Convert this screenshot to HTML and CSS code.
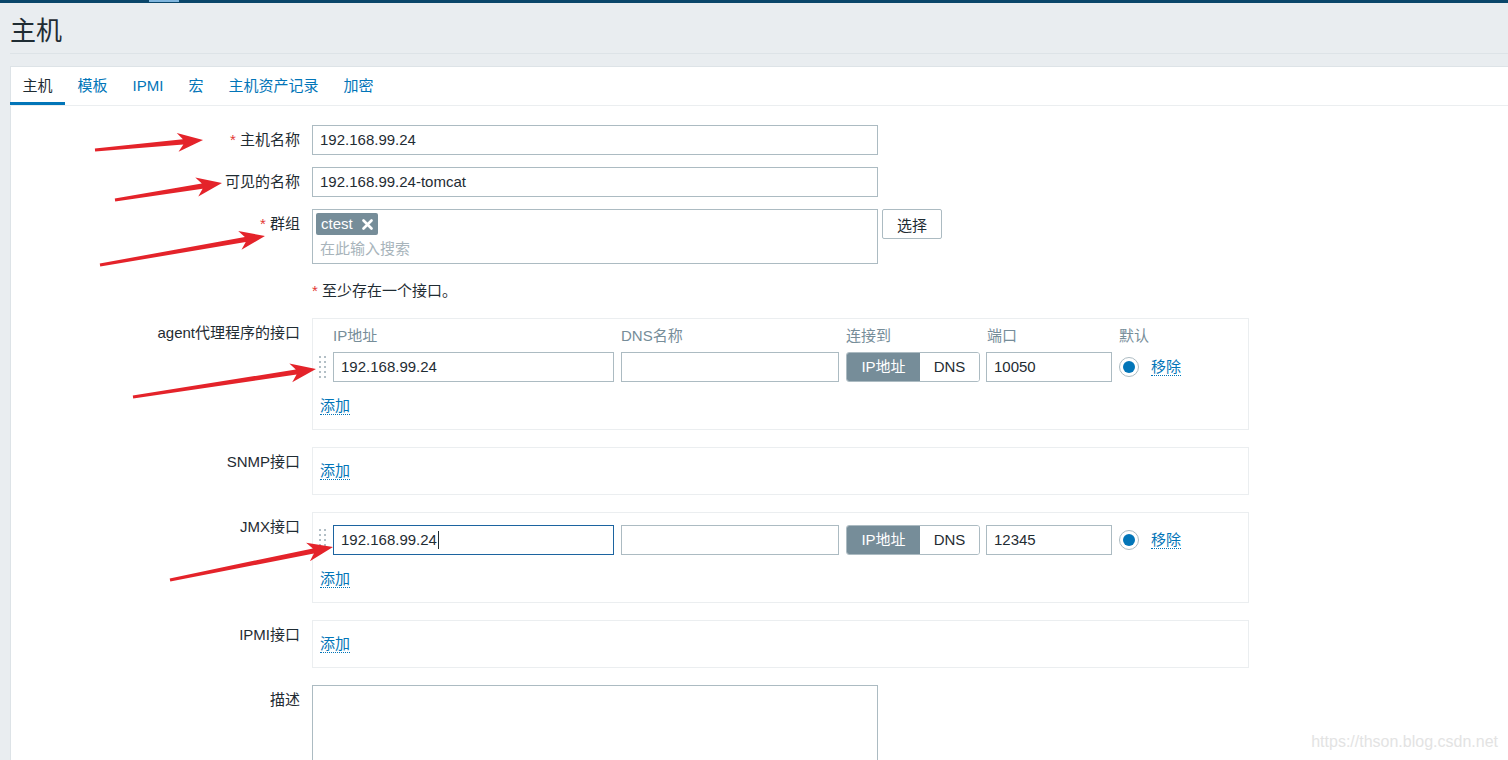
FILE: index.html
```html
<!DOCTYPE html>
<html lang="zh-CN">
<head>
<meta charset="utf-8">
<title>主机</title>
<link rel="stylesheet" href="styles.css">
</head>
<body>
<div class="topbar"><span class="topbar-mark"></span></div>
<div class="page">
  <header class="page-header"><h1 class="page-title">主机</h1></header>
  <div class="panel">
    <nav class="tabs">
      <a class="tab active">主机</a>
      <a class="tab">模板</a>
      <a class="tab">IPMI</a>
      <a class="tab">宏</a>
      <a class="tab">主机资产记录</a>
      <a class="tab">加密</a>
    </nav>
    <div class="form">
      <div class="row">
        <div class="lbl"><span class="req">*</span> 主机名称</div>
        <div class="field"><div class="input">192.168.99.24</div></div>
      </div>
      <div class="row">
        <div class="lbl">可见的名称</div>
        <div class="field"><div class="input">192.168.99.24-tomcat</div></div>
      </div>
      <div class="row row-lg">
        <div class="lbl"><span class="req">*</span> 群组</div>
        <div class="field ms-wrap">
          <div class="ms">
            <span class="tag">ctest<svg class="tag-x" width="11" height="11" viewBox="0 0 11 11"><path d="M1.5 1.5 L9.5 9.5 M9.5 1.5 L1.5 9.5" stroke="#fff" stroke-width="2.6" stroke-linecap="round"/></svg></span>
            <div class="ms-placeholder">在此输入搜索</div>
          </div>
          <button class="btn">选择</button>
        </div>
      </div>
      <div class="row row-lg">
        <div class="lbl-empty"></div>
        <div class="note"><span class="req">*</span> 至少存在一个接口。</div>
      </div>
      <div class="row row-box">
        <div class="lbl">agent代理程序的接口</div>
        <div class="ifbox has-head">
          <div class="if-grid if-head">
            <span></span><span>IP地址</span><span>DNS名称</span><span>连接到</span><span>端口</span><span class="nowrap">默认</span><span></span>
          </div>
          <div class="if-grid if-row">
            <svg class="handle" width="8" height="23" viewBox="0 0 8 23"><g fill="#b3bfc6"><rect x="1" y="0" width="2" height="2"/><rect x="6" y="0" width="2" height="2"/><rect x="1" y="5" width="2" height="2"/><rect x="6" y="5" width="2" height="2"/><rect x="1" y="10" width="2" height="2"/><rect x="6" y="10" width="2" height="2"/><rect x="1" y="15" width="2" height="2"/><rect x="6" y="15" width="2" height="2"/><rect x="1" y="20" width="2" height="2"/><rect x="6" y="20" width="2" height="2"/></g></svg>
            <div class="input fill">192.168.99.24</div>
            <div class="input fill"></div>
            <div class="toggle"><span class="seg on">IP地址</span><span class="seg">DNS</span></div>
            <div class="input fill">10050</div>
            <span class="radio"></span>
            <a class="link remove">移除</a>
          </div>
          <div class="if-add"><a class="link">添加</a></div>
        </div>
      </div>
      <div class="row row-box">
        <div class="lbl">SNMP接口</div>
        <div class="ifbox">
          <div class="if-add first"><a class="link">添加</a></div>
        </div>
      </div>
      <div class="row row-box">
        <div class="lbl">JMX接口</div>
        <div class="ifbox">
          <div class="if-grid if-row first">
            <svg class="handle" width="8" height="23" viewBox="0 0 8 23"><g fill="#b3bfc6"><rect x="1" y="0" width="2" height="2"/><rect x="6" y="0" width="2" height="2"/><rect x="1" y="5" width="2" height="2"/><rect x="6" y="5" width="2" height="2"/><rect x="1" y="10" width="2" height="2"/><rect x="6" y="10" width="2" height="2"/><rect x="1" y="15" width="2" height="2"/><rect x="6" y="15" width="2" height="2"/><rect x="1" y="20" width="2" height="2"/><rect x="6" y="20" width="2" height="2"/></g></svg>
            <div class="input fill focus">192.168.99.24<span class="caret"></span></div>
            <div class="input fill"></div>
            <div class="toggle"><span class="seg on">IP地址</span><span class="seg">DNS</span></div>
            <div class="input fill">12345</div>
            <span class="radio"></span>
            <a class="link remove">移除</a>
          </div>
          <div class="if-add"><a class="link">添加</a></div>
        </div>
      </div>
      <div class="row row-box">
        <div class="lbl">IPMI接口</div>
        <div class="ifbox">
          <div class="if-add first"><a class="link">添加</a></div>
        </div>
      </div>
      <div class="row">
        <div class="lbl">描述</div>
        <div class="field"><div class="textarea"></div></div>
      </div>
    </div>
  </div>
</div>

<svg class="annot" width="1508" height="760" viewBox="0 0 1508 760">
  <g fill="#e4232a">
    <polygon transform="translate(95 150) rotate(-5.29)" points="0,-1.5 88.5,-2.6 83,-9.5 108.5,0 83,9.5 88.5,2.6 0,1.5"/>
    <polygon transform="translate(115 200) rotate(-9.03)" points="0,-1.5 88.3,-2.6 82.8,-9.5 108.3,0 82.8,9.5 88.3,2.6 0,1.5"/>
    <polygon transform="translate(100 265) rotate(-9.97)" points="0,-1.5 147.5,-2.6 142,-9.5 167.5,0 142,9.5 147.5,2.6 0,1.5"/>
    <polygon transform="translate(133 397) rotate(-8.70)" points="0,-1.5 165.1,-2.6 159.6,-9.5 185.1,0 159.6,9.5 165.1,2.6 0,1.5"/>
    <polygon transform="translate(170 580) rotate(-11.45)" points="0,-1.5 146.3,-2.6 140.8,-9.5 166.3,0 140.8,9.5 146.3,2.6 0,1.5"/>
  </g>
</svg>
<div class="watermark">https://thson.blog.csdn.net</div>
</body>
</html>
```

FILE: styles.css
```css
* { box-sizing: border-box; }
html, body { margin: 0; padding: 0; overflow: hidden; }
body {
  position: relative;
  width: 1508px;
  height: 760px;
  background: #e9edf0;
  font-family: "Liberation Sans", Arial, "Noto Sans CJK SC", sans-serif;
  font-size: 15px;
  color: #1f2c33;
}

.topbar { height: 3px; background: #0a466a; display: flex; }
.topbar-mark { width: 30px; height: 2px; margin-left: 149px; background: #80b6de; }

.page { padding-left: 10px; }
.page-header {
  height: 51px;
  border-bottom: 1px solid #dde3e7;
  margin-bottom: 12px;
}
.page-title {
  margin: 0;
  padding-top: 10px;
  font-size: 26px;
  line-height: 36px;
  font-weight: normal;
  color: #1f2c33;
}

.panel {
  background: #fff;
  border-left: 1px solid #dde3e7;
  border-top: 1px solid #dde3e7;
  height: 700px;
}

.tabs {
  display: flex;
  height: 39px;
  margin-left: -1px;
  border-bottom: 1px solid #ebeef0;
}
.tab {
  padding: 0 12.5px;
  line-height: 38px;
  height: 38px;
  color: #0275b8;
  text-decoration: none;
}
.tab.active { color: #1f2c33; box-shadow: inset 0 -3px 0 #0275b8; }

.form { padding-top: 19px; }
.row {
  display: grid;
  grid-template-columns: 289px 1fr;
  column-gap: 12px;
  margin-bottom: 12px;
}
.row-lg { margin-bottom: 18px; }
.row-box { margin-bottom: 17px; }
.lbl {
  text-align: right;
  padding-top: 6px;
  line-height: 18px;
  white-space: nowrap;
}
.req { color: #e33734; }
.note { line-height: 18px; }

.input {
  width: 566px;
  height: 30px;
  border: 1px solid #acbbc2;
  padding: 0 7px;
  line-height: 28px;
  background: #fff;
  white-space: nowrap;
  overflow: hidden;
}
.input.fill { width: auto; }
.input.focus { border-color: #1c64a0; }
.caret {
  display: inline-block;
  width: 1px;
  height: 18px;
  margin-left: 1px;
  background: #1f2c33;
  vertical-align: -4px;
}

.ms-wrap { display: flex; align-items: flex-start; }
.ms {
  width: 566px;
  height: 55px;
  border: 1px solid #acbbc2;
  padding: 3px;
}
.tag {
  display: inline-flex;
  align-items: center;
  gap: 9px;
  height: 22px;
  padding: 0 5px 0 5px;
  background: #768d99;
  color: #fff;
  border-radius: 2px;
  line-height: 22px;
}
.ms-placeholder {
  margin-top: 4px;
  padding-left: 4px;
  line-height: 20px;
  color: #a8b4bb;
}
.btn {
  margin-left: 4px;
  width: 60px;
  height: 30px;
  border: 1px solid #acbbc2;
  border-radius: 2px;
  background: #fff;
  font: inherit;
  color: #1f2c33;
  padding: 0;
}

.ifbox {
  width: 937px;
  border: 1px solid #ebeef0;
  padding: 11px 7px 11px 5px;
}
.ifbox.has-head { padding-top: 8px; }
.if-grid {
  display: grid;
  grid-template-columns: 8px 281px 218px 134px 125px 20px auto;
  column-gap: 7px;
  align-items: center;
}
.if-grid > .input.fill:nth-of-type(4) { margin-left: -1px; }
.if-head { line-height: 18px; color: #768d99; }
.nowrap { white-space: nowrap; }
.if-row { margin-top: 7px; }
.if-row.first { margin-top: 1px; }
.handle { display: block; }
.if-add { margin-top: 12px; padding-left: 2px; line-height: 24px; }
.if-add.first { margin-top: 0; }

.toggle {
  display: flex;
  height: 30px;
  border: 1px solid #acbbc2;
  border-radius: 3px;
  overflow: hidden;
}
.seg {
  flex: 1;
  text-align: center;
  line-height: 28px;
  color: #1f2c33;
  background: #fff;
}
.seg.on { flex: 0 0 73px; background: #768d99; color: #fff; }

.radio {
  width: 20px;
  height: 20px;
  border: 1px solid #acbbc2;
  border-radius: 50%;
  display: flex;
  align-items: center;
  justify-content: center;
  background: #fff;
}
.radio::after {
  content: "";
  width: 12px;
  height: 12px;
  border-radius: 50%;
  background: #0275b8;
}
.link {
  color: #0275b8;
  text-decoration: none;
  border-bottom: 1px dotted #0275b8;
}
.remove { justify-self: start; margin-left: 5px; line-height: 17px; }

.textarea {
  width: 566px;
  height: 100px;
  border: 1px solid #acbbc2;
  background: #fff;
}

.annot {
  position: absolute;
  left: 0;
  top: 0;
  pointer-events: none;
}
.watermark {
  position: absolute;
  right: 10px;
  bottom: 9px;
  font-size: 16px;
  line-height: 18px;
  color: #e3e3e3;
}
```
